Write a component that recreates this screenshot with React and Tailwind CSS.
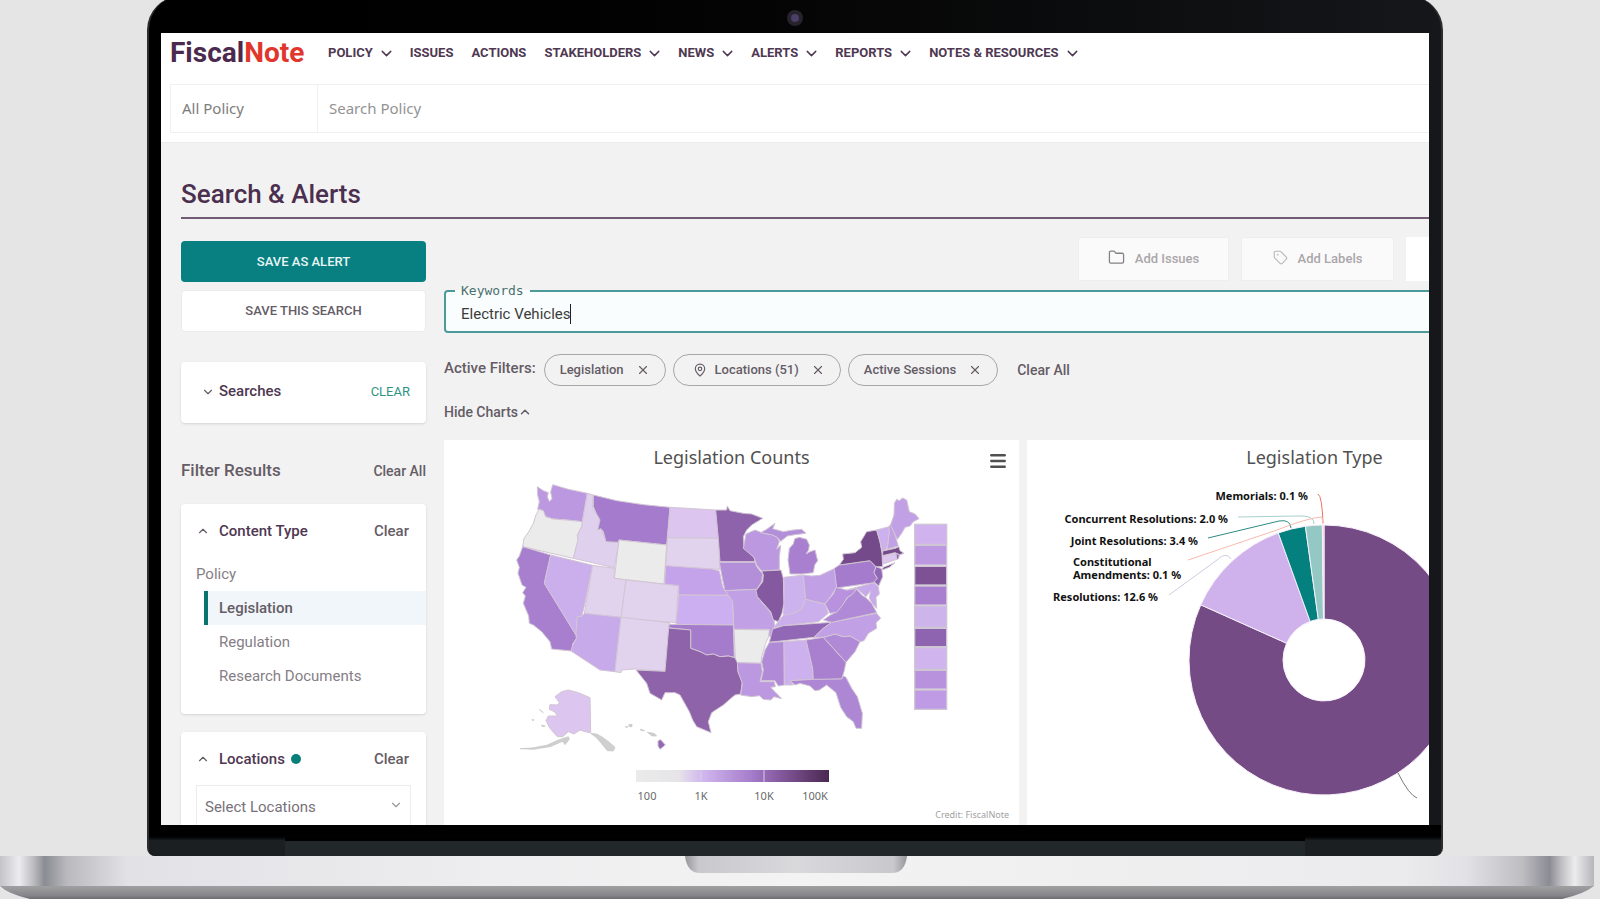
import { useState } from "react";
import { ChevronDown, ChevronUp, Folder, Menu, Tag, X, MapPin } from "lucide-react";

const navItems = [
  { label: "POLICY", menu: true },
  { label: "ISSUES" },
  { label: "ACTIONS" },
  { label: "STAKEHOLDERS", menu: true },
  { label: "NEWS", menu: true },
  { label: "ALERTS", menu: true },
  { label: "REPORTS", menu: true },
  { label: "NOTES & RESOURCES", menu: true },
];

const contentTypes = ["Legislation", "Regulation", "Research Documents"];

// State outlines, west to east
const states = [
  { id: "WA", fill: "#bb98e0", points: "112,50 130,62 145,68 142,80 148,95 156,86 152,66 158,44 205,58 262,70 247,155 200,150 160,147 135,140 130,122 113,118 118,95 113,75" },
  { id: "OR", fill: "#ebebeb", points: "117,118 130,122 137,140 160,147 200,150 247,155 246,168 232,196 234,210 220,265 68,230 72,205 86,186 100,160 108,135" },
  { id: "CA", fill: "#a87fcf", points: "68,230 152,255 133,340 228,495 229,505 218,522 215,543 155,537 150,515 125,485 100,465 88,460 86,438 70,400 76,378 68,368 78,352 66,345 54,310 58,292 50,270 58,258" },
  { id: "NV", fill: "#cbaeec", points: "152,255 278,286 255,400 245,440 232,440 228,495 133,340" },
  { id: "ID", fill: "#dfd0ee", points: "262,70 280,75 278,115 300,150 295,178 305,180 318,215 357,217 343,293 220,265 234,210 232,196 246,168 247,155" },
  { id: "MT", fill: "#a57ccd", points: "280,75 350,92 430,104 510,112 500,225 357,210 355,217 318,215 310,185 303,176 293,180 300,150 288,128 280,110" },
  { id: "WY", fill: "#ebebeb", points: "357,210 500,225 492,342 343,325" },
  { id: "UT", fill: "#e1d3ee", points: "278,286 343,295 343,325 378,330 363,442 253,430" },
  { id: "CO", fill: "#e1d3ee", points: "378,330 535,347 528,458 363,445" },
  { id: "AZ", fill: "#c7aaea", points: "253,430 363,442 345,605 300,600 213,543 220,522 230,505 228,488 232,440 245,440" },
  { id: "NM", fill: "#e1d3ee", points: "363,442 508,458 495,604 405,597 365,600 363,608 345,605" },
  { id: "ND", fill: "#dcc5ef", points: "510,112 647,120 655,205 503,203" },
  { id: "SD", fill: "#e1d3ee", points: "503,203 655,205 660,298 635,297 497,288" },
  { id: "NE", fill: "#c5a3ea", points: "497,287 635,297 658,303 668,350 685,376 536,375 536,347 494,342" },
  { id: "KS", fill: "#ccaff0", points: "536,375 685,376 698,395 700,465 528,463" },
  { id: "OK", fill: "#a57ccb", points: "508,463 700,465 703,562 685,558 660,560 640,552 620,555 600,545 572,535 572,480 506,474" },
  { id: "TX", fill: "#8e63aa", points: "506,474 572,480 572,535 600,545 620,555 640,552 660,560 685,558 712,565 714,605 727,635 722,672 705,675 695,683 670,705 635,728 625,755 633,788 590,770 578,750 568,725 540,675 525,668 495,668 485,690 450,670 440,640 408,600 495,604" },
  { id: "MN", fill: "#8e63ac", points: "647,120 680,120 682,108 690,122 730,130 755,132 788,145 755,165 740,180 730,200 732,230 762,262 765,275 660,275 655,205" },
  { id: "IA", fill: "#b28fd8", points: "658,277 765,277 770,290 788,312 785,335 770,358 675,362 668,330" },
  { id: "MO", fill: "#c2a0e6", points: "675,362 768,358 775,385 810,425 822,452 825,470 812,500 800,495 808,478 702,478 698,395 685,376" },
  { id: "AR", fill: "#ebebeb", points: "702,478 808,480 806,500 797,520 785,560 783,580 712,578 706,565" },
  { id: "LA", fill: "#bb98e0", points: "712,578 783,580 787,605 780,635 823,635 826,650 812,652 825,665 845,686 822,680 812,690 790,688 778,677 755,680 722,675 727,640 714,605" },
  { id: "WI", fill: "#bb98e0", points: "738,192 765,180 790,190 815,194 832,202 838,215 830,238 842,225 838,262 838,300 785,303 770,285 762,262 730,235" },
  { id: "UP", fill: "#b28fd8", points: "782,188 800,178 825,160 818,176 850,185 880,180 905,178 918,190 885,194 862,198 842,214 832,202 815,194" },
  { id: "MI", fill: "#a980cf", points: "870,312 864,270 868,235 880,222 884,206 898,202 920,208 928,225 926,240 918,252 930,245 945,240 953,272 944,285 940,308 905,312" },
  { id: "IL", fill: "#8559a0", points: "785,303 843,300 850,325 852,400 846,430 835,455 820,450 812,425 772,380 768,362 788,335 790,315" },
  { id: "IN", fill: "#cdb3ee", points: "852,322 910,315 917,388 905,420 880,430 850,438 852,400" },
  { id: "OH", fill: "#c2a0e6", points: "910,315 935,318 960,316 1005,295 1010,350 995,375 975,402 945,395 917,388" },
  { id: "KY", fill: "#cbaeec", points: "820,474 835,455 850,436 880,430 905,418 917,388 945,395 975,402 985,430 955,455 850,467" },
  { id: "TN", fill: "#9168b5", points: "818,477 850,467 995,457 970,475 942,502 808,517" },
  { id: "MS", fill: "#b08ad6", points: "808,517 852,515 853,645 835,648 825,632 783,632 790,600 785,575 795,540" },
  { id: "AL", fill: "#cdb0ee", points: "852,515 918,510 938,595 940,628 870,632 880,645 853,645" },
  { id: "GA", fill: "#a980cf", points: "918,510 970,502 1000,535 1038,577 1032,605 1025,627 940,630 938,595" },
  { id: "FL", fill: "#ad86d4", points: "870,632 940,628 1025,627 1030,618 1038,622 1055,655 1072,680 1087,730 1085,775 1068,775 1060,755 1040,740 1022,712 1015,690 1008,668 980,645 958,660 945,662 930,648 900,640 885,645" },
  { id: "SC", fill: "#b08ad6", points: "970,502 1005,492 1030,500 1050,498 1080,515 1065,545 1038,577 1000,535" },
  { id: "NC", fill: "#c2a0e6", points: "942,502 970,475 995,457 1130,430 1142,445 1128,458 1130,475 1105,490 1092,512 1080,515 1050,498 1030,500 1005,492 970,502" },
  { id: "VA", fill: "#b08ad6", points: "970,450 990,436 1010,425 1030,400 1045,380 1070,358 1085,375 1100,385 1115,400 1130,428 995,457" },
  { id: "WV", fill: "#b892de", points: "975,402 1000,372 1008,352 1040,360 1075,352 1055,375 1042,382 1028,405 1010,427 990,430" },
  { id: "MD", fill: "#c7aaea", points: "1040,360 1122,338 1135,350 1138,372 1128,382 1130,415 1118,402 1108,385 1112,362 1098,380 1070,356" },
  { id: "PA", fill: "#a57ccd", points: "1003,295 1018,285 1110,272 1128,292 1122,308 1132,325 1122,338 1010,354" },
  { id: "NY", fill: "#754a8a", points: "1018,285 1030,268 1028,252 1065,248 1085,232 1082,215 1100,185 1130,180 1140,215 1146,250 1148,290 1128,290 1110,272" },
  { id: "NJ", fill: "#9168b5", points: "1128,290 1145,296 1148,320 1136,348 1122,335 1132,325 1122,308" },
  { id: "VT", fill: "#cdb0ee", points: "1130,180 1167,170 1168,190 1160,238 1146,242 1140,215" },
  { id: "NH", fill: "#c2a0e6", points: "1167,170 1174,160 1185,195 1195,228 1162,238 1168,190" },
  { id: "ME", fill: "#c2a0e6", points: "1172,165 1182,135 1183,100 1190,88 1198,92 1208,84 1220,90 1228,125 1245,132 1257,146 1240,155 1230,168 1215,172 1205,190 1192,208" },
  { id: "MA", fill: "#754a8a", points: "1148,243 1185,235 1197,230 1200,242 1212,250 1198,254 1185,248 1148,257" },
  { id: "CT", fill: "#dcc5ef", points: "1148,258 1188,250 1190,268 1150,282" },
  { id: "RI", fill: "#9168b5", points: "1188,250 1198,254 1196,266 1190,268" },
  { id: "LI", fill: "#754a8a", points: "1146,300 1150,292 1185,278 1168,292" },
  { id: "AK", fill: "#dcc5ef", points: "165,680 185,665 205,660 235,668 270,683 272,788 255,785 240,780 222,792 205,785 188,800 172,800 150,775 138,752 145,738 172,738 165,726 148,718 150,704 172,705 178,698" },
  { id: "HI", fill: "#9168b5", points: "474,812 482,809 496,825 480,838 474,828" },
];

const islands = [
  "272,790 290,792 305,800 322,812 345,832 340,843 322,842 300,815 288,802",
  "60,836 95,834 140,826 175,810 205,800 208,808 195,824 188,814 150,830 100,838",
  "118,718 130,728 124,724",
  "96,748 102,750 98,752",
  "124,765 136,768 128,770",
  "376,770 384,770 380,773",
  "386,764 396,763 396,770 388,770",
  "421,777 434,782 424,782",
  "442,787 462,790 470,798 456,798",
];

// Small-state boxes at the right of the map
const stateBoxes = [
  { y: 163, h: 60, fill: "#cfb2ee" },
  { y: 226, h: 59, fill: "#bb98e0" },
  { y: 289, h: 56, fill: "#7d5193" },
  { y: 348, h: 57, fill: "#a980cf" },
  { y: 408, h: 64, fill: "#cdb5ec" },
  { y: 475, h: 55, fill: "#8e63b0" },
  { y: 533, h: 65, fill: "#d0b4ee" },
  { y: 601, h: 56, fill: "#b992de" },
  { y: 660, h: 58, fill: "#be9be4" },
];

const slices = [
  { name: "Legislation", value: 81.7, fill: "#754b85" },
  { name: "Resolutions", value: 12.8, fill: "#cfb1ec" },
  { name: "Joint Resolutions", value: 3.3, fill: "#04807f" },
  { name: "Concurrent Resolutions", value: 2.0, fill: "#94c8c4" },
  { name: "Memorials", value: 0.2, fill: "#f3c9c4" },
];

function arcPath(from, to, r, hole) {
  const at = (pct, rad) => {
    const a = (pct / 100) * 2 * Math.PI;
    return `${297 + rad * Math.sin(a)} ${180 - rad * Math.cos(a)}`;
  };
  const large = to - from > 50 ? 1 : 0;
  return `M${at(from, r)} A${r} ${r} 0 ${large} 1 ${at(to, r)} L${at(to, hole)} A${hole} ${hole} 0 ${large} 0 ${at(from, hole)} Z`;
}

export default function App() {
  return (
    <div className="flex h-screen min-h-[600px] flex-col overflow-hidden bg-[#e5e5e5] font-[Roboto,sans-serif]">
      <div className="-mt-1 ml-[147px] mr-[157px] flex min-h-0 flex-1 flex-col rounded-t-[34px] rounded-b-lg border-x-2 border-[#2b2d2f] bg-gradient-to-r from-black via-[#050505] to-[#15171a]">
        {/* Camera */}
        <div className="flex h-[37px] shrink-0 items-end justify-center pb-[7px]">
          <span className="flex size-4 items-center justify-center rounded-full bg-[#26232c]">
            <span className="size-2 rounded-full bg-[#4a3f66]" />
          </span>
        </div>
        <div className="mr-3 ml-3 flex min-h-0 flex-1 flex-col overflow-hidden bg-[#f2f2f2]">
          <Header />
          <SearchPage />
        </div>
        <div className="flex h-[31px] shrink-0 flex-col items-center justify-between rounded-b-lg bg-gradient-to-b from-black from-30% to-[#1b1f22] to-50%">
          <span className="h-3" />
          <span className="mx-auto h-[19px] w-[79%] border-t-4 border-black bg-[#22272a]" />
        </div>
      </div>
      <LaptopBase />
    </div>
  );
}

function Header() {
  return (
    <header className="h-[110px] shrink-0 border-b border-[#ececec] bg-white">
      <div className="flex h-[51px] items-center pl-[9px] pb-[11px]">
        <a href="#home" className="w-[158px] text-[28px] leading-none font-bold whitespace-nowrap text-[#4b2a4d]">
          Fiscal<span className="text-[#e0362c]">Note</span>
        </a>
        <nav className="flex gap-[18px]">
          {navItems.map((item) => (
            <a
              key={item.label}
              href="#nav"
              className="flex items-center gap-[5px] text-[13px] leading-5 font-bold whitespace-nowrap text-[#4f3852]"
            >
              {item.label}
              {item.menu && <ChevronDown className="-mr-[3px] size-[17px]" />}
            </a>
          ))}
        </nav>
      </div>
      <div className="ml-[9px] flex h-[49px] border-y border-l border-[#f0f0f0] font-['Noto_Sans',sans-serif] text-[15px] text-[#7d7d7d]">
        <select aria-label="Policy scope" className="w-[147px] appearance-none border-r border-[#f0f0f0] pl-[11px] outline-none">
          <option>All Policy</option>
        </select>
        <input
          aria-label="Search Policy"
          placeholder="Search Policy"
          className="flex-1 pl-[11px] outline-none placeholder:text-[#939393]"
        />
      </div>
    </header>
  );
}

function SearchPage() {
  return (
    <main className="flex min-h-0 flex-1 flex-col overflow-hidden pl-5">
      <h1 className="shrink-0 border-b-2 border-[#735a75] pt-[35px] pb-[7px] text-[26px] leading-8 font-medium text-[#4b2f4e]">
        Search &amp; Alerts
      </h1>
      <div className="flex min-h-0 flex-1 gap-[18px] pt-[18px]">
        <Sidebar />
        <Results />
      </div>
    </main>
  );
}

function Sidebar() {
  const [type, setType] = useState("Legislation");

  return (
    <aside className="flex w-[245px] shrink-0 flex-col pt-1 text-[#655c66]">
      <button className="h-[41px] shrink-0 rounded-sm bg-[#087f81] text-[13px] font-medium text-[#e8f5f5]">SAVE AS ALERT</button>
      <button className="mt-2 h-[42px] shrink-0 rounded-sm border border-[#ebebeb] bg-white text-[13px] font-medium">
        SAVE THIS SEARCH
      </button>

      <div className="mt-[30px] flex h-[61px] shrink-0 items-center rounded-sm bg-white pr-4 pb-0.5 pl-5 shadow">
        <ChevronDown className="mr-1 size-[14px]" />
        <h2 className="text-[15px] font-medium text-[#4f3852]">Searches</h2>
        <button className="ml-auto text-[13px] text-[#2d9484]">CLEAR</button>
      </div>

      <div className="mt-9 flex h-6 shrink-0 items-center justify-between">
        <h2 className="text-[17px] font-medium">Filter Results</h2>
        <button className="text-sm font-medium">Clear All</button>
      </div>

      <section className="mt-[21px] h-[210px] shrink-0 rounded-sm bg-white shadow">
        <CardHeading title="Content Type" />
        <p className="mt-[19px] pl-[15px] text-[15px] leading-6 text-[#857e86]">Policy</p>
        <div className="mt-[5px] flex flex-col pl-[23px]">
          {contentTypes.map((item) => (
            <button
              key={item}
              onClick={() => setType(item)}
              className={`h-[34px] border-l-4 pl-[11px] text-left text-[15px] ${
                type === item
                  ? "border-[#08746f] bg-[#f0f6f9] font-medium text-[#655c66]"
                  : "border-transparent text-[#857e86]"
              }`}
            >
              {item}
            </button>
          ))}
        </div>
      </section>

      <section className="mt-[18px] shrink-0 rounded-sm bg-white pb-6 shadow">
        <CardHeading title="Locations" dot />
        <div className="relative mx-[15px] mt-[14px]">
          <select
            aria-label="Select Locations"
            className="h-[44px] w-full appearance-none border border-[#ececec] pl-2 text-[15px] text-[#78717a]"
          >
            <option>Select Locations</option>
          </select>
          <ChevronDown className="absolute top-[13px] right-2 size-[14px] text-[#999999]" />
        </div>
      </section>
    </aside>
  );
}

function CardHeading({ title, dot }) {
  return (
    <div className="flex items-center pt-[15px] pr-[17px] pl-[15px]">
      <ChevronUp className="mr-[9px] size-[14px]" />
      <h2 className="text-[15px] leading-6 font-medium text-[#4f3852]">{title}</h2>
      {dot && <span className="ml-1.5 size-[10px] rounded-full bg-[#087f78]" />}
      <button className="ml-auto text-[15px] font-medium">Clear</button>
    </div>
  );
}

function Results() {
  return (
    <div className="flex min-w-0 flex-1 flex-col overflow-hidden text-[#655c66]">
      {/* Bulk actions, the row runs past the edge of the screen */}
      <div className="ml-[634px] flex h-[44px] shrink-0 gap-3 text-[13px] text-[#aaa6aa]">
        <button className="flex w-[151px] shrink-0 items-center justify-center gap-[10px] border border-[#eeeeee] bg-[#fafafa] font-medium">
          <Folder className="mb-1 size-[17px] text-[#858085]" strokeWidth={1.8} />
          Add Issues
        </button>
        <button className="flex w-[153px] shrink-0 items-center justify-center gap-[10px] border border-[#eeeeee] bg-[#fafafa] font-medium">
          <Tag className="mb-1 size-[15px] text-[#bbb8bb]" strokeWidth={1.8} />
          Add Labels
        </button>
        <span className="w-[152px] shrink-0 bg-white" />
      </div>

      <fieldset className="mt-0.5 -mr-4 h-[50px] shrink-0 rounded border-2 border-[#4b9a99] bg-[#fafdfd] pl-[15px]">
        <legend className="-ml-1.5 px-1.5 font-['DejaVu_Sans_Mono',monospace] text-[13px] leading-4 text-[#49706f]">
          <label htmlFor="keywords">Keywords</label>
        </legend>
        <div className="flex h-[30px] items-center">
          <input
            id="keywords"
            defaultValue="Electric Vehicles"
            className="field-sizing-content text-[15px] text-[#3c3c3c] outline-none"
          />
          <span className="h-5 w-px bg-[#222222]" />
        </div>
      </fieldset>

      <div className="mt-[21px] flex h-8 shrink-0 items-center text-[13px] font-medium whitespace-nowrap">
        <span className="mr-2 self-start text-[15px] leading-7">Active Filters:</span>
        <FilterPill label="Legislation" />
        <FilterPill label="Locations (51)" pin />
        <FilterPill label="Active Sessions" />
        <button className="ml-3 text-sm">Clear All</button>
      </div>

      <button className="mt-[14px] flex h-6 shrink-0 items-center text-sm font-medium">
        Hide Charts
        <ChevronUp className="size-[14px]" strokeWidth={2.5} />
      </button>

      <div className="mt-4 flex shrink-0 gap-2">
        <MapCard />
        <TypeCard />
      </div>
    </div>
  );
}

function FilterPill({ label, pin }) {
  return (
    <span className="mr-[7px] flex h-8 items-center rounded-full border border-[#a9a6a9] px-[15px]">
      {pin && <MapPin className="mr-2 ml-1 size-[14px]" />}
      {label}
      <button aria-label={`Remove ${label}`} className="ml-3">
        <X className="size-[14px]" />
      </button>
    </span>
  );
}

function MapCard() {
  return (
    <section className="relative h-[400px] w-[575px] shrink-0 bg-white font-['Noto_Sans',sans-serif]">
      <h3 className="pt-[5px] text-center text-lg leading-6 text-[#505050]">Legislation Counts</h3>
      <button aria-label="Chart menu" className="absolute top-[11px] right-[11px]">
        <Menu className="size-5 text-[#505050]" strokeWidth={3} />
      </button>
      <svg viewBox="0 0 1500 870" className="mt-px ml-[56px] h-[290px] w-[500px]">
        <g stroke="#d2c5d4" strokeWidth="3" strokeLinejoin="round">
          {states.map((s) => (
            <polygon key={s.id} points={s.points} fill={s.fill} />
          ))}
        </g>
        {islands.map((points) => (
          <polygon key={points} points={points} fill="#cfcfcf" stroke="#c4c4c4" strokeWidth="2" />
        ))}
        {stateBoxes.map((b) => (
          <rect key={b.y} x="1244" y={b.y} width="96" height={b.h} fill={b.fill} stroke="#cfc6d4" strokeWidth="4" />
        ))}
      </svg>
      <svg viewBox="0 0 575 60" className="h-[60px] w-[575px]">
        <defs>
          <linearGradient id="scale">
            <stop offset="0" stopColor="#ebebeb" />
            <stop offset="0.22" stopColor="#e6e4e8" />
            <stop offset="0.34" stopColor="#d2b8ef" />
            <stop offset="0.6" stopColor="#a57ccb" />
            <stop offset="0.75" stopColor="#84589c" />
            <stop offset="1" stopColor="#4a2850" />
          </linearGradient>
        </defs>
        <rect x="192" y="10" width="193" height="12" fill="url(#scale)" />
        <path d="M257 10v12M320 10v12" stroke="#d9cbe4" />
        <g fontSize="11" fill="#6a6a6a" textAnchor="middle">
          <text x="203" y="40">100</text>
          <text x="257" y="40">1K</text>
          <text x="320" y="40">10K</text>
          <text x="371" y="40">100K</text>
        </g>
        <text x="565" y="58" fontSize="9" fill="#a0a0a0" textAnchor="end">Credit: FiscalNote</text>
      </svg>
    </section>
  );
}

function TypeCard() {
  let start = 0;
  const arcs = slices.map((s) => {
    const from = start;
    start += s.value;
    return { ...s, d: arcPath(from, start, 135, 41) };
  });

  return (
    <section className="h-[400px] w-[575px] shrink-0 bg-white font-['Noto_Sans',sans-serif]">
      <h3 className="pt-[5px] text-center text-lg leading-6 text-[#505050]">Legislation Type</h3>
      <svg viewBox="0 -11 575 350" className="h-[350px] w-[575px]">
        <g stroke="#f7f0fa" strokeWidth="1">
          {arcs.map((a) => (
            <path key={a.name} d={a.d} fill={a.fill} />
          ))}
        </g>
        <g fill="none" strokeWidth="1">
          <path d="M291 14Q295 16 296 43" stroke="#f0705f" />
          <path d="M211 37L270 36Q288 35 287 44" stroke="#a8d0cc" />
          <path d="M181 58L252 41Q263 39 264 48" stroke="#2c8b84" />
          <path d="M161 80L250 50Q280 38 295 37L296 44" stroke="#f8b9ae" />
          <path d="M142 115L190 80Q199 71 204 79" stroke="#d3cbe0" />
          <path d="M371 293Q382 315 390 318" stroke="#7a7a7a" />
        </g>
        <g fontSize="11" fontWeight="700" fill="#111111">
          <text x="281" y="20" textAnchor="end">Memorials: 0.1 %</text>
          <text x="201" y="43" textAnchor="end">Concurrent Resolutions: 2.0 %</text>
          <text x="171" y="65" textAnchor="end">Joint Resolutions: 3.4 %</text>
          <text x="46" y="86">Constitutional</text>
          <text x="46" y="99">Amendments: 0.1 %</text>
          <text x="131" y="121" textAnchor="end">Resolutions: 12.6 %</text>
        </g>
      </svg>
    </section>
  );
}

function LaptopBase() {
  return (
    <div className="mr-1.5 h-[43px] shrink-0">
      <svg viewBox="0 0 1594 43" preserveAspectRatio="none" className="h-full w-full">
        <defs>
          <linearGradient id="deck">
            <stop offset="0" stopColor="#c4c4c8" />
            <stop offset="0.012" stopColor="#ececee" />
            <stop offset="0.02" stopColor="#c2c2c6" />
            <stop offset="0.028" stopColor="#8b8b93" />
            <stop offset="0.042" stopColor="#b9b9be" />
            <stop offset="0.08" stopColor="#e2e2e6" />
            <stop offset="0.3" stopColor="#ededef" />
            <stop offset="0.5" stopColor="#f3f3f3" />
            <stop offset="0.88" stopColor="#ebebed" />
            <stop offset="0.92" stopColor="#e2e2e6" />
            <stop offset="0.955" stopColor="#bdbdc2" />
            <stop offset="0.972" stopColor="#8b8b93" />
            <stop offset="0.98" stopColor="#c2c2c6" />
            <stop offset="0.988" stopColor="#ececee" />
            <stop offset="1" stopColor="#b5b5ba" />
          </linearGradient>
          <linearGradient id="under" x2="0" y2="1">
            <stop offset="0" stopColor="#a0a0a3" />
            <stop offset="0.7" stopColor="#88888c" />
            <stop offset="1" stopColor="#6a6a70" />
          </linearGradient>
          <linearGradient id="notch">
            <stop offset="0" stopColor="#96969a" />
            <stop offset="0.06" stopColor="#c9c9cd" />
            <stop offset="0.5" stopColor="#d9d9dc" />
            <stop offset="0.94" stopColor="#c9c9cd" />
            <stop offset="1" stopColor="#96969a" />
          </linearGradient>
        </defs>
        <path d="M0 30H1594Q1584 38 1562 43H30Q8 38 0 30Z" fill="url(#under)" />
        <path d="M0 0H1594V30H0Z" fill="url(#deck)" />
        <path d="M685 0H907Q905 17 892 17H700Q687 17 685 0Z" fill="url(#notch)" />
      </svg>
    </div>
  );
}
